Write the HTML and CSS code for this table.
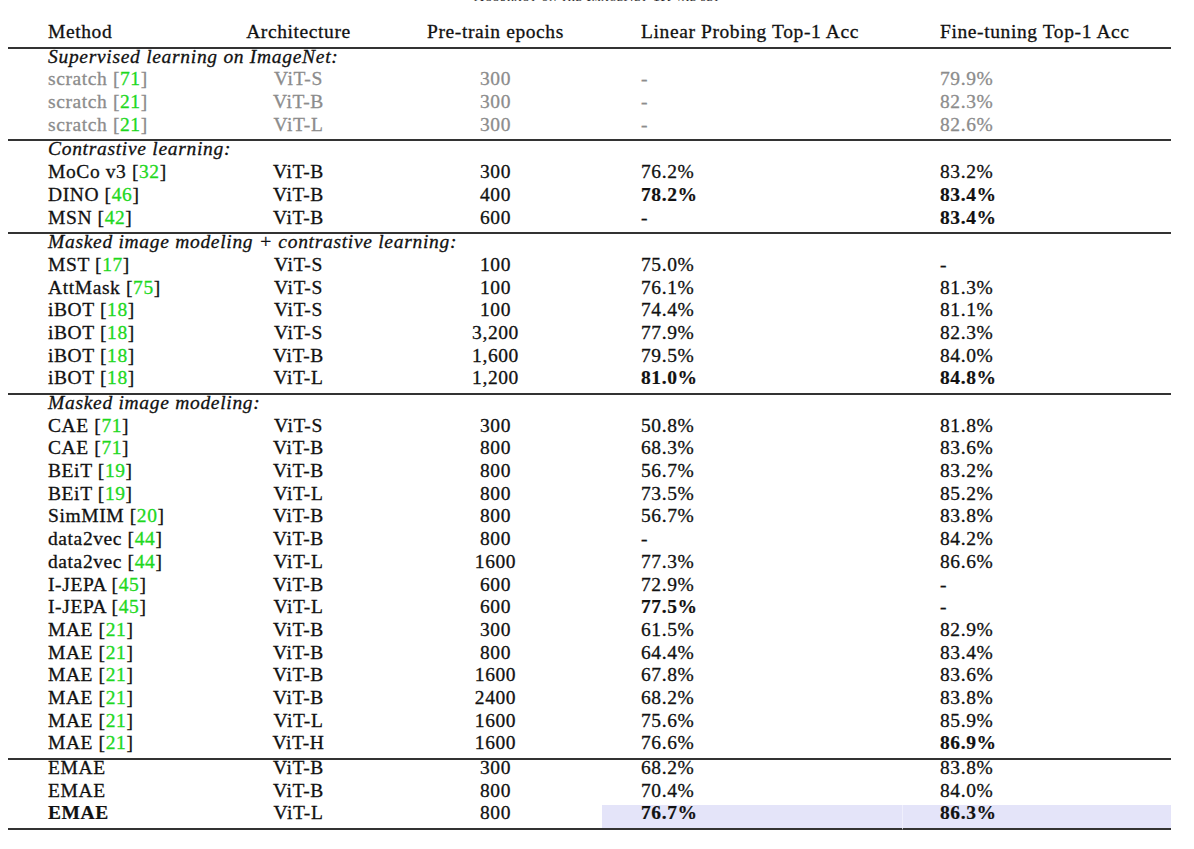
FILE: index.html
```html
<!DOCTYPE html>
<html lang="en">
<head>
    <meta charset="UTF-8">
    <title>Linear probing and fine-tuning on ImageNet-1K</title>
    <link rel="stylesheet" href="styles.css">
</head>
<body>
    <p class="caption">Accuracy on the ImageNet-1K val set</p>

    <table class="results">
        <colgroup>
            <col class="c-method">
            <col class="c-arch">
            <col class="c-epochs">
            <col class="c-linear">
            <col class="c-finetune">
        </colgroup>
        <thead>
            <tr>
                <th class="method">Method</th>
                <th class="mid">Architecture</th>
                <th class="mid">Pre-train epochs</th>
                <th class="acc">Linear Probing Top-1 Acc</th>
                <th class="acc">Fine-tuning Top-1 Acc</th>
            </tr>
        </thead>
        <tbody>
            <!-- Supervised -->
            <tr class="group"><td colspan="5">Supervised learning on ImageNet:</td></tr>
            <tr class="muted"><td class="method">scratch [<span class="cite">71</span>]</td><td class="mid">ViT-S</td><td class="mid">300</td><td class="acc">-</td><td class="acc">79.9%</td></tr>
            <tr class="muted"><td class="method">scratch [<span class="cite">21</span>]</td><td class="mid">ViT-B</td><td class="mid">300</td><td class="acc">-</td><td class="acc">82.3%</td></tr>
            <tr class="muted"><td class="method">scratch [<span class="cite">21</span>]</td><td class="mid">ViT-L</td><td class="mid">300</td><td class="acc">-</td><td class="acc">82.6%</td></tr>

            <!-- Contrastive -->
            <tr class="group rule"><td colspan="5">Contrastive learning:</td></tr>
            <tr><td class="method">MoCo v3 [<span class="cite">32</span>]</td><td class="mid">ViT-B</td><td class="mid">300</td><td class="acc">76.2%</td><td class="acc">83.2%</td></tr>
            <tr><td class="method">DINO [<span class="cite">46</span>]</td><td class="mid">ViT-B</td><td class="mid">400</td><td class="acc best">78.2%</td><td class="acc best">83.4%</td></tr>
            <tr><td class="method">MSN [<span class="cite">42</span>]</td><td class="mid">ViT-B</td><td class="mid">600</td><td class="acc">-</td><td class="acc best">83.4%</td></tr>

            <!-- MIM + contrastive -->
            <tr class="group rule"><td colspan="5">Masked image modeling + contrastive learning:</td></tr>
            <tr><td class="method">MST [<span class="cite">17</span>]</td><td class="mid">ViT-S</td><td class="mid">100</td><td class="acc">75.0%</td><td class="acc">-</td></tr>
            <tr><td class="method">AttMask [<span class="cite">75</span>]</td><td class="mid">ViT-S</td><td class="mid">100</td><td class="acc">76.1%</td><td class="acc">81.3%</td></tr>
            <tr><td class="method">iBOT [<span class="cite">18</span>]</td><td class="mid">ViT-S</td><td class="mid">100</td><td class="acc">74.4%</td><td class="acc">81.1%</td></tr>
            <tr><td class="method">iBOT [<span class="cite">18</span>]</td><td class="mid">ViT-S</td><td class="mid">3,200</td><td class="acc">77.9%</td><td class="acc">82.3%</td></tr>
            <tr><td class="method">iBOT [<span class="cite">18</span>]</td><td class="mid">ViT-B</td><td class="mid">1,600</td><td class="acc">79.5%</td><td class="acc">84.0%</td></tr>
            <tr><td class="method">iBOT [<span class="cite">18</span>]</td><td class="mid">ViT-L</td><td class="mid">1,200</td><td class="acc best">81.0%</td><td class="acc best">84.8%</td></tr>

            <!-- MIM -->
            <tr class="group rule"><td colspan="5">Masked image modeling:</td></tr>
            <tr><td class="method">CAE [<span class="cite">71</span>]</td><td class="mid">ViT-S</td><td class="mid">300</td><td class="acc">50.8%</td><td class="acc">81.8%</td></tr>
            <tr><td class="method">CAE [<span class="cite">71</span>]</td><td class="mid">ViT-B</td><td class="mid">800</td><td class="acc">68.3%</td><td class="acc">83.6%</td></tr>
            <tr><td class="method">BEiT [<span class="cite">19</span>]</td><td class="mid">ViT-B</td><td class="mid">800</td><td class="acc">56.7%</td><td class="acc">83.2%</td></tr>
            <tr><td class="method">BEiT [<span class="cite">19</span>]</td><td class="mid">ViT-L</td><td class="mid">800</td><td class="acc">73.5%</td><td class="acc">85.2%</td></tr>
            <tr><td class="method">SimMIM [<span class="cite">20</span>]</td><td class="mid">ViT-B</td><td class="mid">800</td><td class="acc">56.7%</td><td class="acc">83.8%</td></tr>
            <tr><td class="method">data2vec [<span class="cite">44</span>]</td><td class="mid">ViT-B</td><td class="mid">800</td><td class="acc">-</td><td class="acc">84.2%</td></tr>
            <tr><td class="method">data2vec [<span class="cite">44</span>]</td><td class="mid">ViT-L</td><td class="mid">1600</td><td class="acc">77.3%</td><td class="acc">86.6%</td></tr>
            <tr><td class="method">I-JEPA [<span class="cite">45</span>]</td><td class="mid">ViT-B</td><td class="mid">600</td><td class="acc">72.9%</td><td class="acc">-</td></tr>
            <tr><td class="method">I-JEPA [<span class="cite">45</span>]</td><td class="mid">ViT-L</td><td class="mid">600</td><td class="acc best">77.5%</td><td class="acc">-</td></tr>
            <tr><td class="method">MAE [<span class="cite">21</span>]</td><td class="mid">ViT-B</td><td class="mid">300</td><td class="acc">61.5%</td><td class="acc">82.9%</td></tr>
            <tr><td class="method">MAE [<span class="cite">21</span>]</td><td class="mid">ViT-B</td><td class="mid">800</td><td class="acc">64.4%</td><td class="acc">83.4%</td></tr>
            <tr><td class="method">MAE [<span class="cite">21</span>]</td><td class="mid">ViT-B</td><td class="mid">1600</td><td class="acc">67.8%</td><td class="acc">83.6%</td></tr>
            <tr><td class="method">MAE [<span class="cite">21</span>]</td><td class="mid">ViT-B</td><td class="mid">2400</td><td class="acc">68.2%</td><td class="acc">83.8%</td></tr>
            <tr><td class="method">MAE [<span class="cite">21</span>]</td><td class="mid">ViT-L</td><td class="mid">1600</td><td class="acc">75.6%</td><td class="acc">85.9%</td></tr>
            <tr><td class="method">MAE [<span class="cite">21</span>]</td><td class="mid">ViT-H</td><td class="mid">1600</td><td class="acc">76.6%</td><td class="acc best">86.9%</td></tr>

            <!-- Ours -->
            <tr class="rule"><td class="method">EMAE</td><td class="mid">ViT-B</td><td class="mid">300</td><td class="acc">68.2%</td><td class="acc">83.8%</td></tr>
            <tr><td class="method">EMAE</td><td class="mid">ViT-B</td><td class="mid">800</td><td class="acc">70.4%</td><td class="acc">84.0%</td></tr>
            <tr class="last"><td class="method best">EMAE</td><td class="mid">ViT-L</td><td class="mid">800</td><td class="acc best hl">76.7%</td><td class="acc best hl seam">86.3%</td></tr>
        </tbody>
    </table>
</body>
</html>
```

FILE: styles.css
```css
* {
    box-sizing: border-box;
}

body {
    margin: 0;
    background: #ffffff;
    color: #111111;
    font-family: "Liberation Serif", "Times New Roman", serif;
}

/* Caption, mostly cut off by the top edge */
.caption {
    margin: -10px 0 0;
    height: 14px;
    font-size: 14px;
    line-height: 14px;
    font-variant: small-caps;
    letter-spacing: 0.6px;
    text-align: center;
    color: #222;
}

/* Results table */
.results {
    margin: 20px 0 0 8px;
    width: 1163px;
    table-layout: fixed;
    border-collapse: separate;
    border-spacing: 0;
    font-size: 19.5px;
    letter-spacing: 0.6px;
}

.c-method { width: 200px; }
.c-arch { width: 181px; }
.c-epochs { width: 213px; }
.c-linear { width: 300px; }
.c-finetune { width: 269px; }

.results th,
.results td {
    padding: 0 0 7.7px;
    line-height: 15px;
    font-weight: normal;
    white-space: nowrap;
    vertical-align: top;
    -webkit-text-stroke: 0.3px currentColor;
}

.results th {
    border-bottom: 2px solid #333;
}

.results .method {
    padding-left: 40px;
    text-align: left;
}

.results .mid {
    text-align: center;
}

.results .acc {
    padding-left: 39px;
    text-align: left;
}

.results .acc + .acc {
    padding-left: 38px;
}

.results .group td {
    padding-left: 40px;
    font-style: italic;
    letter-spacing: 0.7px;
}

.rule td {
    border-top: 2px solid #333;
}

.last td {
    border-bottom: 2px solid #333;
}

.muted td {
    color: #8c8c8c;
}

.cite {
    color: #1ed81e;
}

.results .best {
    font-weight: bold;
    -webkit-text-stroke: 0.2px currentColor;
}

.hl {
    background: #e4e4f9;
}

.results .hl.seam {
    border-left: 1px solid #efeffc;
    padding-left: 37px;
}
```
